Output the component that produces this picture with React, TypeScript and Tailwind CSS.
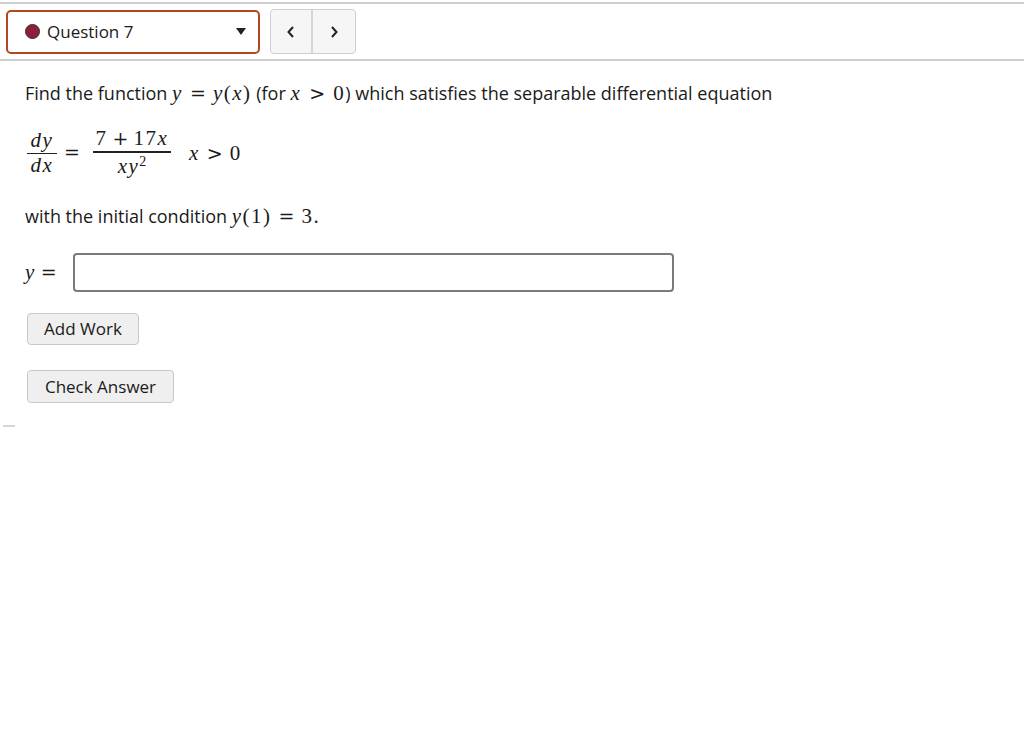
import React from 'react';

const serif = { fontFamily: '"Liberation Serif", "DejaVu Serif", serif' };
const opFont = { fontFamily: '"DejaVu Serif", "Liberation Serif", serif' };

// math letters / digits
function V({ children }: { children: React.ReactNode }) {
  return <i className="text-[21px] leading-none tracking-[1.5px]" style={serif}>{children}</i>;
}

function N({ children }: { children: React.ReactNode }) {
  return <span className="text-[21px] leading-none tracking-[1.5px]" style={serif}>{children}</span>;
}

// relation sign in a fixed box
function Rel({ children, w = 'w-[30px]' }: { children: React.ReactNode; w?: string }) {
  return (
    <span className={`inline-block text-center text-[19px] leading-none ${w}`} style={opFont}>
      {children}
    </span>
  );
}

function Frac({ num, den, w }: { num: React.ReactNode; den: React.ReactNode; w: string }) {
  return (
    <span className={`inline-flex flex-col items-center ${w}`} style={serif}>
      <span className="text-[21px] leading-[24px] pb-[2px] flex items-baseline">{num}</span>
      <span className="w-full h-[1.5px] bg-[#222]" />
      <span className="text-[21px] leading-[24px] pt-[1px] flex items-baseline">{den}</span>
    </span>
  );
}

export default function App() {
  return (
    <div className="w-[1024px] h-[729px] bg-white text-[#1a1a1a] relative" style={{ fontFamily: '"Open Sans", Lato, sans-serif' }}>
      {/* header strip */}
      <div className="pt-[2px]">
        <div className="h-[2px] bg-[#cfcfcf]" />
        <div className="flex items-center gap-[10px] pl-[6px] h-[55px]">
          <button className="w-[254px] h-[44px] flex items-center border-2 border-[#b5461f] rounded-[5px] pl-[17px] pr-[12px]">
            <span className="w-[15px] h-[15px] rounded-full bg-[#8c1f3a] border border-[#3b2a2e]" />
            <span className="ml-[7px] text-[17px]">Question 7</span>
            <span className="ml-auto w-0 h-0 border-l-[5px] border-r-[5px] border-t-[7px] border-l-transparent border-r-transparent border-t-[#222]" />
          </button>
          <div className="flex h-[45px] border border-[#cfcfcf] rounded-[4px] bg-[#f6f6f6]">
            <button className="w-[42px] flex items-center justify-center border-r-2 border-[#d6d6d6]">
              <svg width="10" height="14" viewBox="0 0 10 14" fill="none" stroke="#222" strokeWidth="2"><path d="M7 2 L2.5 7 L7 12" /></svg>
            </button>
            <button className="w-[42px] flex items-center justify-center">
              <svg width="10" height="14" viewBox="0 0 10 14" fill="none" stroke="#222" strokeWidth="2"><path d="M3 2 L7.5 7 L3 12" /></svg>
            </button>
          </div>
        </div>
        <div className="h-[2px] bg-[#cfcfcf]" />
      </div>

      <div className="pl-[25px] pt-[20px]">
        <p className="text-[18px] leading-[24px]">
          Find the function <V>y</V><Rel>=</Rel><V>y</V><N>(</N><V>x</V><N>)</N> (for <V>x</V><Rel w="w-[32px]">&gt;</Rel><N>0</N>) which satisfies the separable differential equation
        </p>

        <div className="flex items-center mt-[20px] h-[56px]">
          <Frac w="w-[30px] ml-[2px]" num={<V>dy</V>} den={<V>dx</V>} />
          <span className="ml-[4px] mr-[10px]"><Rel w="w-[22px]">=</Rel></span>
          <Frac
            w="w-[78px]"
            num={<span className="flex items-baseline"><N>7</N><Rel w="w-[26px]">+</Rel><N>17</N><V>x</V></span>}
            den={<span><V>xy</V><sup className="text-[14px]" style={serif}>2</sup></span>}
          />
          <span className="ml-[18px] flex items-baseline"><V>x</V><Rel w="w-[30px]">&gt;</Rel><N>0</N></span>
        </div>

        <p className="text-[18px] leading-[24px] mt-[23px]">
          with the initial condition <V>y</V><N>(1)</N><Rel>=</Rel><N>3.</N>
        </p>

        <div className="flex items-center mt-[25px]">
          <span className="w-[48px] flex items-baseline"><V>y</V><Rel w="w-[26px]">=</Rel></span>
          <input className="w-[601px] h-[39px] border-2 border-[#7a7a7a] rounded-[4px] outline-none" />
        </div>

        <button className="mt-[21px] ml-[2px] block w-[112px] h-[32px] bg-[#efefef] border border-[#c8c8c8] rounded-[4px] text-[17px]">
          Add Work
        </button>
        <button className="mt-[25px] ml-[2px] block w-[147px] h-[33px] bg-[#efefef] border border-[#c8c8c8] rounded-[4px] text-[17px]">
          Check Answer
        </button>
      </div>

      <div className="mt-[22px] ml-[3px] w-[12px] h-[2px] bg-[#d6d6d6]" />
    </div>
  );
}
